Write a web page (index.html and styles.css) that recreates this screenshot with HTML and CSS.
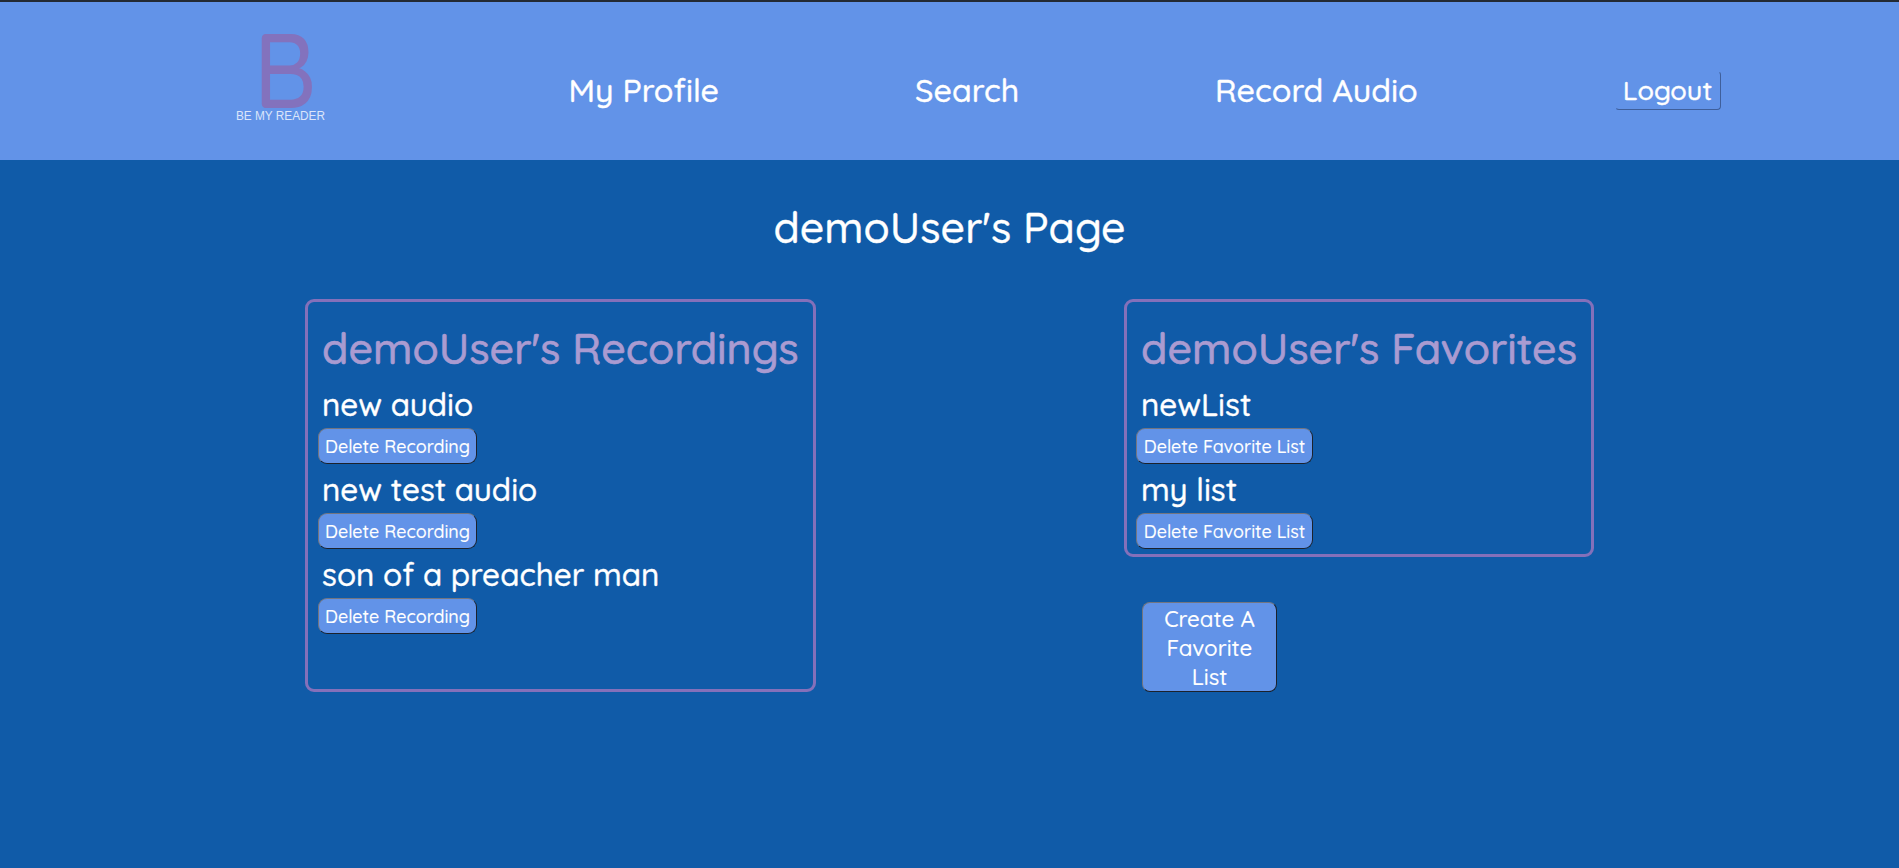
FILE: index.html
```html
<!DOCTYPE html>
<html lang="en">
<head>
<meta charset="utf-8">
<title>Be My Reader</title>
<link rel="stylesheet" href="styles.css">
</head>
<body>
<header class="site-header">
  <a class="logo" href="#">
    <svg width="90" height="96" viewBox="0 0 90 96" aria-label="Be My Reader">
      <text class="logo-mark" transform="translate(17.3 77.5) scale(0.92 1)">B</text>
      <text class="logo-name" x="0" y="89.7" textLength="89" lengthAdjust="spacingAndGlyphs">BE MY READER</text>
    </svg>
  </a>
  <a class="nav-link" href="#">My Profile</a>
  <a class="nav-link" href="#">Search</a>
  <a class="nav-link" href="#">Record Audio</a>
  <button class="logout">Logout</button>
</header>
<main>
  <h1 class="page-title">demoUser's Page</h1>
  <div class="columns">
    <section class="panel recordings">
      <h2>demoUser's Recordings</h2>
      <ul class="items">
        <li><a href="#">new audio</a><button class="btn">Delete Recording</button></li>
        <li><a href="#">new test audio</a><button class="btn">Delete Recording</button></li>
        <li><a href="#">son of a preacher man</a><button class="btn">Delete Recording</button></li>
      </ul>
    </section>
    <div class="side">
      <section class="panel favorites">
        <h2>demoUser's Favorites</h2>
        <ul class="items">
          <li><a href="#">newList</a><button class="btn">Delete Favorite List</button></li>
          <li><a href="#">my list</a><button class="btn">Delete Favorite List</button></li>
        </ul>
      </section>
      <button class="btn create">Create A Favorite List</button>
    </div>
  </div>
</main>
</body>
</html>
```

FILE: styles.css
```css
* { box-sizing: border-box; }

body {
  margin: 0;
  min-height: 100vh;
  background: #105ba8;
  color: #fff;
  font-family: Quicksand, Lato, sans-serif;
  font-weight: 500;
  -webkit-text-stroke: 0.35px;
}

a { color: inherit; text-decoration: none; }

button { font: inherit; color: inherit; margin: 0; white-space: nowrap; }

.site-header {
  display: grid;
  grid-template-columns: 332.5px 346.5px 300px 400px 106px;
  align-items: start;
  height: 160px;
  padding-left: 236px;
  border-top: 2px solid #232a33;
  background: #6293e8;
}

.logo { margin-top: 28px; }
.logo svg { display: block; overflow: visible; }

.logo-mark {
  font: 500 105px Quicksand, Lato, sans-serif;
  fill: #8372bd;
  -webkit-text-stroke: 0;
}

.logo-name {
  font: 400 12px "Liberation Sans", Arial, sans-serif;
  fill: #dbe5fa;
}

.nav-link {
  margin-top: 68px;
  font-size: 32.2px;
  line-height: 40px;
}

.logout {
  height: 39px;
  margin-top: 69px;
  padding: 0 1px 2px 0;
  border: 1px solid;
  border-color: transparent #3f5f9b #3f5f9b transparent;
  border-radius: 4px;
  background: none;
  font-size: 27px;
}

.page-title {
  margin: 0;
  padding-top: 41px;
  font-size: 42.9px;
  font-weight: 500;
  line-height: 53px;
  text-align: center;
}

.columns {
  display: flex;
  justify-content: space-between;
  margin-top: 45px;
  padding: 0 305px;
}

.panel {
  border: 3px solid #8470ba;
  border-radius: 9px;
  padding-top: 19px;
}
.panel h2 {
  margin: 0 0 10px 14px;
  color: #aa9bd1;
  font-size: 43px;
  font-weight: 500;
  line-height: 54px;
  white-space: nowrap;
  -webkit-text-stroke: 0.7px;
}

.recordings { width: 511px; height: 393px; }
.favorites { width: 470px; height: 258px; }

.items { list-style: none; margin: 0; padding: 0 0 0 10px; }
.items li { height: 85px; }
.items a {
  display: block;
  margin: 0 0 3px 4px;
  font-size: 31.4px;
  line-height: 40px;
}
.favorites .items { padding-left: 9px; }
.favorites .items a { margin-left: 5px; }

.btn {
  display: block;
  width: 159px;
  height: 36px;
  padding: 0;
  border: 1px solid;
  border-color: #747680 #1c222c #1c222c #747680;
  border-radius: 9px;
  background: #6293e8;
  font-size: 17.9px;
  line-height: 34px;
  text-align: center;
  -webkit-text-stroke: 0.1px;
}
.favorites .btn { width: 177px; }

.side { width: 470px; }
.create {
  width: 135px;
  height: 90px;
  margin: 45px 0 0 18px;
  padding: 2px 18px 0;
  border-radius: 8px;
  font-size: 22.3px;
  line-height: 29px;
  white-space: normal;
}
```
